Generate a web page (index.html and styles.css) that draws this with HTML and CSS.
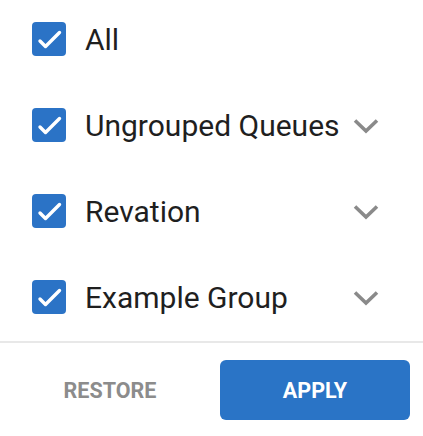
FILE: index.html
```html
<!DOCTYPE html>
<html>
<head>
<meta charset="utf-8">
<link rel="stylesheet" href="styles.css">
</head>
<body>
<div class="panel">
  <ul class="list">
    <li class="row">
      <span class="box"><svg viewBox="0 0 34 34" width="34" height="34"><polyline points="8,19 13.5,24.5 27.5,10.5" fill="none" stroke="#fff" stroke-width="3.4" stroke-linecap="round" stroke-linejoin="round"/></svg></span>
      <span class="label">All</span>
    </li>
    <li class="row">
      <span class="box"><svg viewBox="0 0 34 34" width="34" height="34"><polyline points="8,19 13.5,24.5 27.5,10.5" fill="none" stroke="#fff" stroke-width="3.4" stroke-linecap="round" stroke-linejoin="round"/></svg></span>
      <span class="label">Ungrouped Queues</span>
      <span class="chev"><svg viewBox="0 0 26 16" width="26" height="16"><polyline points="2,2.5 13,13 24,2.5" fill="none" stroke="#8a8a8a" stroke-width="3.6"/></svg></span>
    </li>
    <li class="row">
      <span class="box"><svg viewBox="0 0 34 34" width="34" height="34"><polyline points="8,19 13.5,24.5 27.5,10.5" fill="none" stroke="#fff" stroke-width="3.4" stroke-linecap="round" stroke-linejoin="round"/></svg></span>
      <span class="label">Revation</span>
      <span class="chev"><svg viewBox="0 0 26 16" width="26" height="16"><polyline points="2,2.5 13,13 24,2.5" fill="none" stroke="#8a8a8a" stroke-width="3.6"/></svg></span>
    </li>
    <li class="row">
      <span class="box"><svg viewBox="0 0 34 34" width="34" height="34"><polyline points="8,19 13.5,24.5 27.5,10.5" fill="none" stroke="#fff" stroke-width="3.4" stroke-linecap="round" stroke-linejoin="round"/></svg></span>
      <span class="label">Example Group</span>
      <span class="chev"><svg viewBox="0 0 26 16" width="26" height="16"><polyline points="2,2.5 13,13 24,2.5" fill="none" stroke="#8a8a8a" stroke-width="3.6"/></svg></span>
    </li>
  </ul>
  <div class="footer">
    <button class="btn restore">RESTORE</button>
    <button class="btn apply">APPLY</button>
  </div>
</div>
</body>
</html>
```
FILE: styles.css
```css
html, body {
  margin: 0;
  padding: 0;
  background: #fff;
}
body {
  font-family: Roboto, "Noto Sans", sans-serif;
  width: 423px;
  height: 436px;
  overflow: hidden;
}
.list {
  list-style: none;
  margin: 0;
  padding: 22px 44px 0 32px;
  display: flex;
  flex-direction: column;
  gap: 52px;
}
.row {
  display: flex;
  align-items: center;
  height: 34px;
}
.box {
  width: 34px;
  height: 34px;
  border-radius: 4px;
  background: #2b73c6;
  display: flex;
  flex-shrink: 0;
}
.label {
  margin-left: 19px;
  flex: 1;
  font-size: 30px;
  color: #1f1f1f;
  white-space: nowrap;
}
.chev {
  width: 26px;
  height: 16px;
  display: flex;
  margin-top: 2px;
}
.footer {
  margin-top: 27px;
  border-top: 2px solid #e8e8e8;
  padding: 17px 13px 0 15px;
  display: flex;
  gap: 15px;
}
.btn {
  width: 190px;
  height: 60px;
  border: none;
  border-radius: 6px;
  font-family: Roboto, sans-serif;
  font-weight: 700;
  font-size: 21.5px;
  padding: 0;
  cursor: pointer;
}
.restore {
  background: transparent;
  color: #8c8c8c;
}
.apply {
  background: #2a74c6;
  color: #fff;
}
```
